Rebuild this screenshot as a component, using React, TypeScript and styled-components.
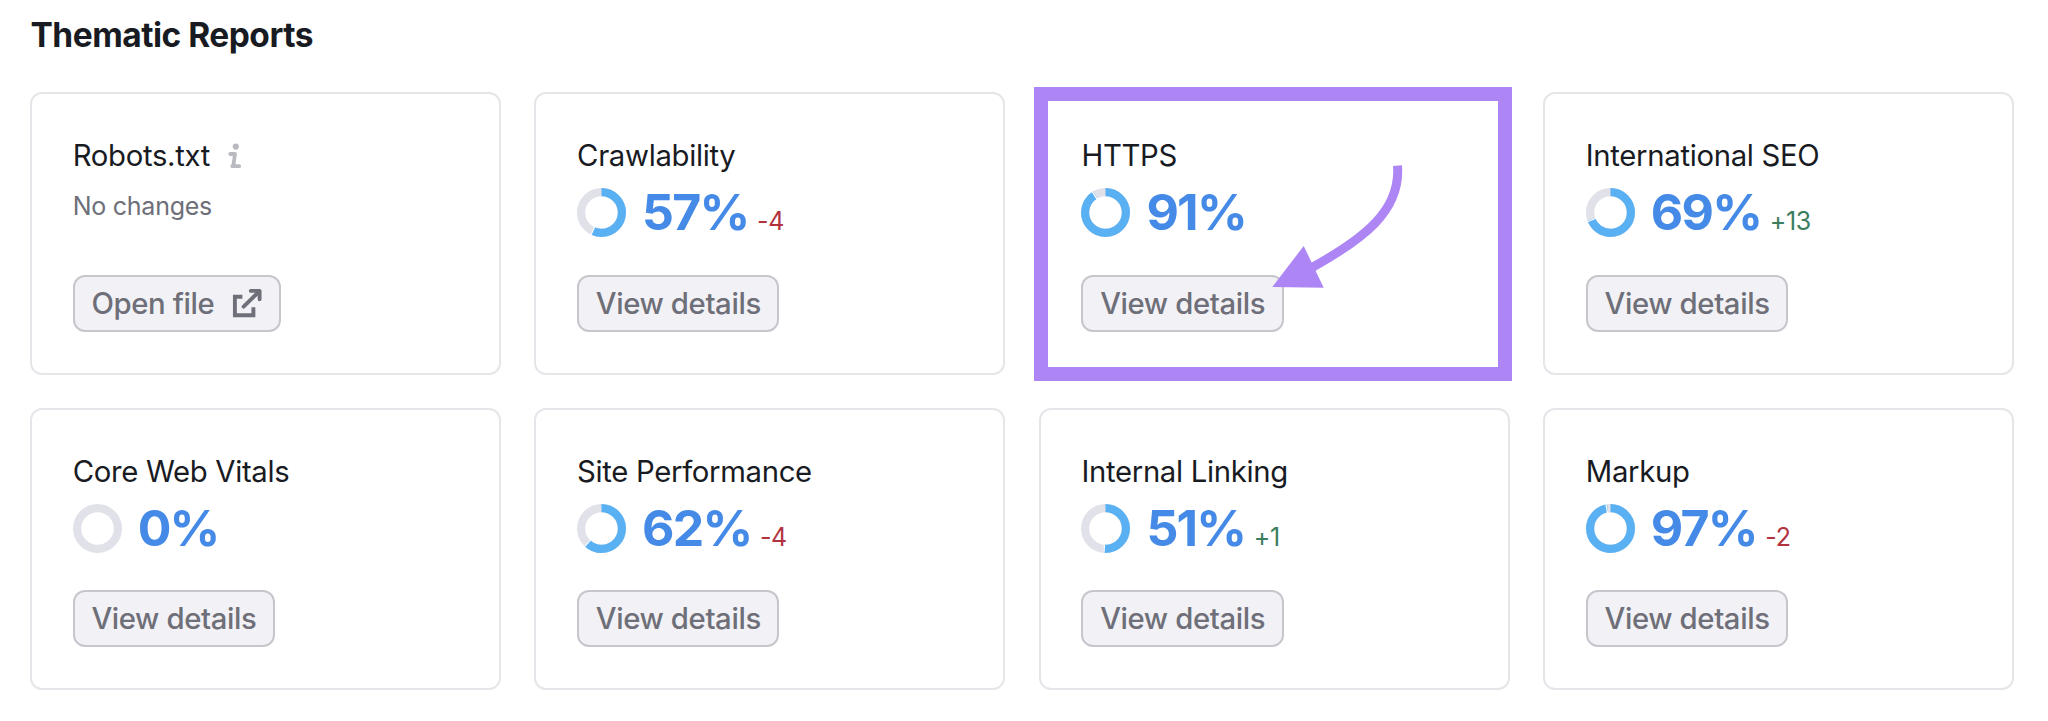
import React from 'react';
import styled, { createGlobalStyle } from 'styled-components';

const GlobalStyle = createGlobalStyle`
  *, *::before, *::after { box-sizing: border-box; }
  body {
    margin: 0;
    background: #fff;
    color: #191b23;
    font-family: Inter, "Liberation Sans", sans-serif;
  }
`;

const Page = styled.main`
  min-height: 721px;
  padding: 15px 34px 0 30px;
`;

const Heading = styled.h2`
  margin: 0 0 37.1px 0.5px;
  font-size: 33.5px;
  line-height: 40px;
  font-weight: 700;
  letter-spacing: -0.5px;
`;

const Grid = styled.div`
  display: grid;
  grid-template-columns: repeat(4, 1fr);
  gap: 33.1px 33.5px;
`;

const Card = styled.section`
  position: relative;
  display: flex;
  flex-direction: column;
  align-items: flex-start;
  height: 282.5px;
  padding: 44px 41px 0 40.7px;
  border: 2px solid #e6e6ea;
  border-radius: 12px;
`;

const CardTitle = styled.h3`
  display: flex;
  align-items: center;
  margin: 0;
  height: 36px;
  font-size: 29.3px;
  line-height: 36px;
  font-weight: 400;
  letter-spacing: -0.32px;
  white-space: nowrap;
`;

const InfoIcon = styled.svg`
  margin-left: 18.3px;
  color: #b9babf;
`;

const Body = styled.div`
  height: 100.7px;
`;

const Note = styled.p`
  margin: 0;
  padding-top: 17px;
  font-size: 25px;
  line-height: 30px;
  letter-spacing: -0.25px;
  color: #6e6f78;
`;

const Score = styled.div`
  display: flex;
  align-items: center;
  padding-top: 8px;
  height: 69px;
`;

const Donut = styled.svg`
  flex: none;
  margin-right: 16px;
`;

const Figures = styled.div`
  display: flex;
  align-items: baseline;
  gap: 8.5px;
  padding-bottom: 1.2px;
`;

const Value = styled.strong`
  font-size: 50px;
  line-height: 60px;
  font-weight: 700;
  letter-spacing: -1.8px;
  color: #448ae6;
`;

const Delta = styled.span<{ $up: boolean }>`
  font-size: 25px;
  line-height: 30px;
  letter-spacing: -0.3px;
  color: ${({ $up }) => ($up ? '#3b7d5d' : '#b2323f')};
`;

const Button = styled.button`
  display: inline-flex;
  align-items: center;
  height: 57px;
  padding: 0 16.7px;
  border: 2px solid #c6c7cc;
  border-radius: 12px;
  background: #f2f2f6;
  color: #6e6f78;
  font-family: inherit;
  font-size: 29.3px;
  font-weight: 500;
  letter-spacing: -0.38px;
  white-space: nowrap;
`;

const ButtonIcon = styled.svg`
  margin-left: 17.5px;
`;

const Highlight = styled.div`
  position: absolute;
  top: -7px;
  left: -7px;
  width: 478px;
  height: 294px;
  border: 14px solid #ad85f5;
`;

const Arrow = styled.svg`
  position: absolute;
  top: 70px;
  left: 229px;
`;

function Ring({ percent }: { percent: number }) {
  const r = 20.4;
  const length = 2 * Math.PI * r;
  const filled = (length * percent) / 100;
  const angle = (percent / 100) * 2 * Math.PI;
  return (
    <Donut width="49" height="49" viewBox="0 0 49 49" fill="none">
      <circle cx="24.5" cy="24.5" r={r} stroke="#e0e1e9" strokeWidth="8.2" />
      {percent > 0 && (
        <>
          <circle
            cx="24.5"
            cy="24.5"
            r={r}
            stroke="#59b0f3"
            strokeWidth="8.2"
            strokeDasharray={`${filled} ${length}`}
            transform="rotate(-90 24.5 24.5)"
          />
          <line
            x1={24.5 + 15 * Math.sin(angle)}
            y1={24.5 - 15 * Math.cos(angle)}
            x2={24.5 + 25 * Math.sin(angle)}
            y2={24.5 - 25 * Math.cos(angle)}
            stroke="#fff"
            strokeWidth="1.2"
          />
        </>
      )}
    </Donut>
  );
}

type Report = { title: string; percent: number; delta?: string; highlighted?: boolean };

const reports: Report[] = [
  { title: 'Crawlability', percent: 57, delta: '-4' },
  { title: 'HTTPS', percent: 91, highlighted: true },
  { title: 'International SEO', percent: 69, delta: '+13' },
  { title: 'Core Web Vitals', percent: 0 },
  { title: 'Site Performance', percent: 62, delta: '-4' },
  { title: 'Internal Linking', percent: 51, delta: '+1' },
  { title: 'Markup', percent: 97, delta: '-2' },
];

function RobotsCard() {
  return (
    <Card>
      <CardTitle>
        Robots.txt
        <InfoIcon width="14" height="26" viewBox="0 0 14 26" fill="none">
          <circle cx="7.8" cy="3.6" r="3.1" fill="currentColor" />
          <path
            d="M2.3 11H7L5.3 23M4.3 23.2H11.2"
            stroke="currentColor"
            strokeWidth="3.8"
            strokeLinecap="round"
            strokeLinejoin="round"
          />
        </InfoIcon>
      </CardTitle>
      <Body>
        <Note>No changes</Note>
      </Body>
      <Button>
        Open file
        <ButtonIcon width="30" height="30" viewBox="0 0 30 30" fill="none" stroke="currentColor" strokeWidth="3.9">
          <path d="M10.4 8.8H2.9V27.2H21.4V19.2" />
          <path d="M11.6 18.6L26 4.6" strokeLinecap="round" />
          <path d="M18.8 2.9H27.6V11.3" strokeLinecap="round" strokeLinejoin="round" />
        </ButtonIcon>
      </Button>
    </Card>
  );
}

function ReportCard({ title, percent, delta, highlighted }: Report) {
  return (
    <Card>
      <CardTitle>{title}</CardTitle>
      <Body>
        <Score>
          <Ring percent={percent} />
          <Figures>
            <Value>{percent}%</Value>
            {delta && <Delta $up={delta.startsWith('+')}>{delta}</Delta>}
          </Figures>
        </Score>
      </Body>
      <Button>View details</Button>
      {highlighted && (
        <>
          <Highlight />
          <Arrow width="140" height="130" viewBox="1270 164 140 130" fill="none">
            <path d="M1397.5 165.7C1401 211 1363 239 1313 267" stroke="#ad85f5" strokeWidth="9" />
            <path d="M1272.3 287L1303.7 246L1323.7 287.7Z" fill="#ad85f5" />
          </Arrow>
        </>
      )}
    </Card>
  );
}

export default function App() {
  return (
    <>
      <GlobalStyle />
      <Page>
        <Heading>Thematic Reports</Heading>
        <Grid>
          <RobotsCard />
          {reports.map((report) => (
            <ReportCard key={report.title} {...report} />
          ))}
        </Grid>
      </Page>
    </>
  );
}
